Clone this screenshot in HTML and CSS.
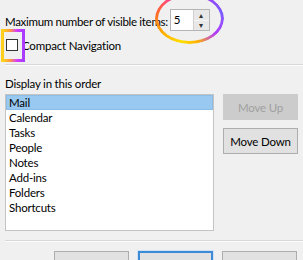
FILE: index.html
```html
<!DOCTYPE html>
<html lang="en">
<head>
    <meta charset="UTF-8">
    <meta name="viewport" content="width=device-width, initial-scale=1.0">
    <title>Navigation Options</title>
    <link rel="stylesheet" href="styles.css">
</head>
<body>
    <div class="dialog">
        <div class="row-max">
            <span class="label">Maximum number of visible items:</span>
            <div class="spin">
                <span class="spin-value">5</span>
                <div class="spin-buttons">
                    <span class="spin-btn">&#9652;</span>
                    <span class="spin-btn">&#9662;</span>
                </div>
            </div>
            <span class="mark-ellipse"></span>
        </div>

        <div class="row-check">
            <span class="checkbox"></span>
            <span class="label">Compact Navigation</span>
            <span class="mark-rect"></span>
        </div>

        <div class="separator"></div>

        <div class="order-title">Display in this order</div>

        <div class="order-area">
            <ul class="listbox">
                <li class="selected">Mail</li>
                <li>Calendar</li>
                <li>Tasks</li>
                <li>People</li>
                <li>Notes</li>
                <li>Add-ins</li>
                <li>Folders</li>
                <li>Shortcuts</li>
            </ul>
            <div class="side-buttons">
                <button class="btn" disabled>Move Up</button>
                <button class="btn">Move Down</button>
            </div>
        </div>

        <div class="separator bottom"></div>

        <!-- labels of these buttons sit below the visible area -->
        <div class="footer">
            <button class="btn"></button>
            <button class="btn default"></button>
            <button class="btn"></button>
        </div>
    </div>
</body>
</html>
```

FILE: styles.css
```css
body {
    margin: 0;
    background: #f0f0f0;
    font-family: 'Lato', 'Noto Sans', sans-serif;
    font-size: 11.5px;
    letter-spacing: -0.2px;
    color: #000;
    overflow: hidden;
}

.dialog {
    width: 303px;
    height: 260px;
    position: relative;
    overflow: hidden;
}

/* Top row with spin box */
.row-max {
    display: flex;
    align-items: center;
    padding: 9px 0 0 5px;
    position: relative;
}

.row-max .label {
    margin-right: 2px;
    margin-top: 2px;
    letter-spacing: -0.3px;
}

.spin {
    display: flex;
    width: 40px;
    height: 22px;
    box-sizing: border-box;
    border: 1px solid #b5b5b5;
    background: white;
}

.spin-value {
    flex: 1;
    padding: 3px 0 0 3px;
}

.spin-buttons {
    display: flex;
    flex-direction: column;
    width: 15px;
    border-left: 1px solid #d0d0d0;
}

.spin-btn {
    flex: 1;
    display: flex;
    align-items: center;
    justify-content: center;
    background: #e8e8e8;
    font-size: 8px;
    line-height: 1;
    color: #333;
}

.spin-btn:first-child {
    border-bottom: 1px solid #f5f5f5;
}

.mark-ellipse {
    position: absolute;
    left: 155px;
    top: -7px;
    width: 69px;
    height: 51px;
    border-radius: 50%;
    padding: 3px;
    box-sizing: border-box;
    background: conic-gradient(from 200deg, #ffe000, #ffb000, #ff6a2a, #ff3c9a, #d23cff, #a040ff, #7a5cff, #b43cff, #ffb000, #ffe000);
    -webkit-mask: linear-gradient(#000 0 0) content-box, linear-gradient(#000 0 0);
    -webkit-mask-composite: xor;
    mask-composite: exclude;
}

/* Compact navigation */
.row-check {
    display: flex;
    align-items: center;
    padding: 7px 0 0 6px;
    position: relative;
    height: 14px;
}

.checkbox {
    width: 12px;
    height: 12px;
    box-sizing: border-box;
    border: 1px solid #333;
    background: white;
    margin-right: 4px;
}

.mark-rect {
    position: absolute;
    left: 1px;
    top: -2px;
    width: 24px;
    height: 33px;
    box-sizing: border-box;
    border: 3px solid;
    border-image: linear-gradient(90deg, #ffd21a, #ff9a3c 35%, #d43cff 70%, #a83cff) 1;
}

.separator {
    height: 1px;
    background: #d8d8d8;
    border-bottom: 1px solid #fbfbfb;
    margin: 12px 0 0 5px;
}

.order-title {
    padding: 10px 0 0 5px;
    height: 18px;
    line-height: 16px;
}

/* List and side buttons */
.order-area {
    display: flex;
    padding-left: 5px;
    gap: 9px;
}

.listbox {
    list-style: none;
    margin: 0;
    padding: 0;
    width: 209px;
    height: 137px;
    box-sizing: border-box;
    border: 1px solid #c4c4c4;
    background: white;
}

.listbox li {
    height: 13px;
    line-height: 13px;
    padding-left: 2px;
    border: 1px solid transparent;
}

.listbox li.selected {
    background: #99c9f0;
    border-color: #8cbde6;
}

.side-buttons {
    display: flex;
    flex-direction: column;
    gap: 8px;
}

.btn {
    width: 75px;
    height: 26px;
    font-family: inherit;
    font-size: 11.5px;
    letter-spacing: inherit;
    background: #e1e1e1;
    border: 1px solid #adadad;
    color: #000;
    padding: 0;
}

.btn:disabled {
    background: #cccccc;
    border-color: #cccccc;
    color: #a0a0a0;
}

.btn.default {
    border: 2px solid #3c8ad8;
    box-shadow: 0 0 0 1px #cfe3f5;
}

.separator.bottom {
    margin-top: 9px;
}

.footer {
    display: flex;
    justify-content: flex-end;
    gap: 9px;
    padding: 9px 6px 0 0;
}
```
